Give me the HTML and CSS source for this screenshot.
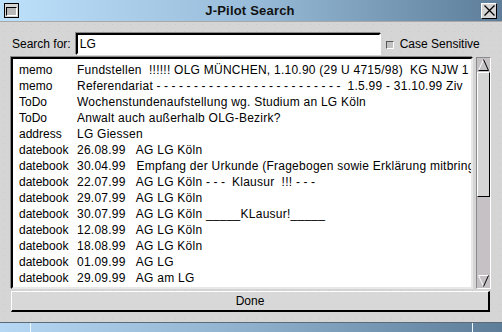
FILE: index.html
```html
<!DOCTYPE html>
<html>

<head>
    <title>J-Pilot Search</title>
    <link rel="stylesheet" href="styles.css">
</head>

<body>

    <div class="window">
        <div class="titlebar">
            <div class="win-btn menu-btn"><span></span></div>
            <div class="title">J-Pilot Search</div>
            <div class="win-btn close-btn">
                <svg width="13" height="13" viewBox="0 0 13 13">
                    <path d="M1.5 1.5 L11.5 11.5 M11.5 1.5 L1.5 11.5" stroke="#000" stroke-width="1.3" fill="none" />
                </svg>
            </div>
        </div>

        <div class="main">
            <div class="search-row">
                <label for="searchInput">Search for:</label>
                <input type="text" id="searchInput" class="search-input" value="LG">
                <span class="check"></span>
                <span class="check-label">Case Sensitive</span>
            </div>

            <div class="results">
                <div class="list">
                    <div class="row"><span class="type">memo</span><span class="text">Fundstellen  !!!!!! OLG MÜNCHEN, 1.10.90 (29 U 4715/98)  KG NJW 1</span></div>
                    <div class="row"><span class="type">memo</span><span class="text">Referendariat <span class="dashes">-------------------------</span> 1.5.99 - 31.10.99 Ziv</span></div>
                    <div class="row"><span class="type">ToDo</span><span class="text">Wochenstundenaufstellung wg. Studium an LG Köln</span></div>
                    <div class="row"><span class="type">ToDo</span><span class="text">Anwalt auch außerhalb OLG-Bezirk?</span></div>
                    <div class="row"><span class="type">address</span><span class="text">LG Giessen</span></div>
                    <div class="row"><span class="type">datebook</span><span class="text">26.08.99   AG LG Köln</span></div>
                    <div class="row"><span class="type">datebook</span><span class="text">30.04.99   Empfang der Urkunde (Fragebogen sowie Erklärung mitbring</span></div>
                    <div class="row"><span class="type">datebook</span><span class="text">22.07.99   AG LG Köln <span class="dashes">---</span> Klausur  !!! <span class="dashes">---</span></span></div>
                    <div class="row"><span class="type">datebook</span><span class="text">29.07.99   AG LG Köln</span></div>
                    <div class="row"><span class="type">datebook</span><span class="text">30.07.99   AG LG Köln _____KLausur!_____</span></div>
                    <div class="row"><span class="type">datebook</span><span class="text">12.08.99   AG LG Köln</span></div>
                    <div class="row"><span class="type">datebook</span><span class="text">18.08.99   AG LG Köln</span></div>
                    <div class="row"><span class="type">datebook</span><span class="text">01.09.99   AG LG</span></div>
                    <div class="row"><span class="type">datebook</span><span class="text">29.09.99   AG am LG</span></div>
                </div>

                <div class="scrollbar">
                    <div class="arrow">
                        <svg width="13" height="14" viewBox="0 0 13 14">
                            <path d="M1.5 12.5 L6.5 1.5" stroke="#fff" fill="none" />
                            <path d="M6.5 1.5 L11.5 12.5 L1.5 12.5" stroke="#000" fill="none" />
                        </svg>
                    </div>
                    <div class="thumb"></div>
                    <div class="trough"></div>
                    <div class="arrow">
                        <svg width="13" height="14" viewBox="0 0 13 14">
                            <path d="M1.5 1.5 L11.5 1.5 M1.5 1.5 L6.5 12.5" stroke="#fff" fill="none" />
                            <path d="M6.5 12.5 L11.5 1.5" stroke="#000" fill="none" />
                        </svg>
                    </div>
                </div>
            </div>

            <button class="done">Done</button>
        </div>

        <div class="frame-bottom">
            <span class="grip left"></span>
            <span class="grip right"></span>
        </div>
    </div>

</body>

</html>
```

FILE: styles.css
```css
body {
    margin: 0;
    font-family: "Liberation Sans", Arial, sans-serif;
    font-size: 12px;
    color: #000;
    background-color: #d5d5d5;
}

.window {
    display: flex;
    flex-direction: column;
    width: 502px;
    height: 332px;
    overflow: hidden;
    background-color: #d5d5d5;
    background-image: radial-gradient(#c9c9c9 0.6px, transparent 0.8px);
    background-size: 9px 7px;
}

/* Title bar */
.titlebar {
    display: flex;
    align-items: center;
    height: 21px;
    padding: 0 4px;
    background: linear-gradient(to right, #bde0fb, #98bcd9 50%, #5d7d99);
    border-bottom: 1px solid #a8a8a8;
}

.title {
    flex: 1;
    text-align: center;
    font-weight: bold;
    font-size: 13px;
    letter-spacing: 0.2px;
    color: #111;
}

.win-btn {
    box-sizing: border-box;
    width: 15px;
    height: 15px;
    display: flex;
    align-items: center;
    justify-content: center;
}

.menu-btn {
    border: 1px solid #000;
    background-color: #d5d5d5;
}

.menu-btn span {
    box-sizing: border-box;
    width: 11px;
    height: 9px;
    margin-top: 1px;
    background-color: #b8b8b8;
    border-top: 1px solid #000;
    border-left: 1px solid #000;
    border-right: 1px solid #fff;
    border-bottom: 1px solid #fff;
}

.close-btn {
    width: 16px;
    height: 16px;
    border: 1px solid #000;
    border-top-color: #fff;
    border-left-color: #fff;
    background-color: #d5d5d5;
    margin-right: 1px;
}

/* Main area */
.main {
    display: flex;
    flex-direction: column;
    padding: 11px 11px 0 11px;
}

.search-row {
    display: flex;
    align-items: center;
    height: 22px;
}

.search-row label {
    margin-left: 1px;
    margin-right: 5px;
}

.search-input {
    box-sizing: border-box;
    width: 305px;
    height: 22px;
    margin: 0;
    padding: 0 0 0 2px;
    font-family: inherit;
    font-size: 12px;
    background-color: #fff;
    border-top: 2px solid #000;
    border-left: 2px solid #000;
    border-right: 2px solid #fff;
    border-bottom: 2px solid #fff;
    box-shadow: -1px -1px 0 #8a8a8a;
    outline: none;
}

.check {
    box-sizing: border-box;
    width: 8px;
    height: 8px;
    margin-left: 5px;
    margin-right: 6px;
    margin-top: 1px;
    background-color: #c2c2c2;
    border-top: 1px solid #555;
    border-left: 1px solid #555;
    border-right: 1px solid #fff;
    border-bottom: 1px solid #fff;
}

/* Results list */
.results {
    display: flex;
    height: 232px;
    margin-top: 2px;
}

.list {
    box-sizing: border-box;
    width: 462px;
    padding: 3px 0 0 6px;
    overflow: hidden;
    background-color: #fff;
    border-top: 2px solid #000;
    border-left: 2px solid #000;
    border-right: 2px solid #e8e8e8;
    border-bottom: 2px solid #e8e8e8;
    box-shadow: -1px -1px 0 #8a8a8a;
}

.row {
    display: flex;
    height: 16px;
    line-height: 16px;
    white-space: pre;
}

.row .type {
    flex: none;
    width: 58px;
}

.row .text {
    flex: none;
    letter-spacing: 0.25px;
}

.dashes {
    letter-spacing: 3.5px;
}

/* Scrollbar */
.scrollbar {
    box-sizing: border-box;
    display: flex;
    flex-direction: column;
    width: 15px;
    margin-left: 3px;
    background-color: #c5c1c5;
    border: 1px solid #8a8a8a;
    border-right-color: #fff;
    border-bottom-color: #fff;
}

.arrow {
    height: 14px;
    display: flex;
    justify-content: center;
}

.thumb {
    box-sizing: border-box;
    height: 125px;
    background-color: #d5d5d5;
    border: 1px solid #000;
    border-top-color: #fff;
    border-left-color: #fff;
}

.trough {
    flex: 1;
}

/* Done button */
.done {
    box-sizing: border-box;
    width: 479px;
    height: 21px;
    margin-top: 2px;
    padding: 0;
    font-family: inherit;
    font-size: 12px;
    color: #000;
    background-color: #d8d8d8;
    border-top: 1px solid #fff;
    border-left: 1px solid #fff;
    border-right: 2px solid #000;
    border-bottom: 2px solid #000;
    cursor: pointer;
}

/* Bottom window frame */
.frame-bottom {
    position: relative;
    height: 9px;
    margin-top: auto;
    background: linear-gradient(to right, #b6d8f4, #8eb0cc 50%, #5d7d99);
    border-top: 1px solid #5a6a78;
}

.grip {
    position: absolute;
    top: 0;
    width: 1px;
    height: 9px;
    background-color: #f0f8ff;
}

.grip.left {
    left: 30px;
}

.grip.right {
    left: 472px;
}
```
